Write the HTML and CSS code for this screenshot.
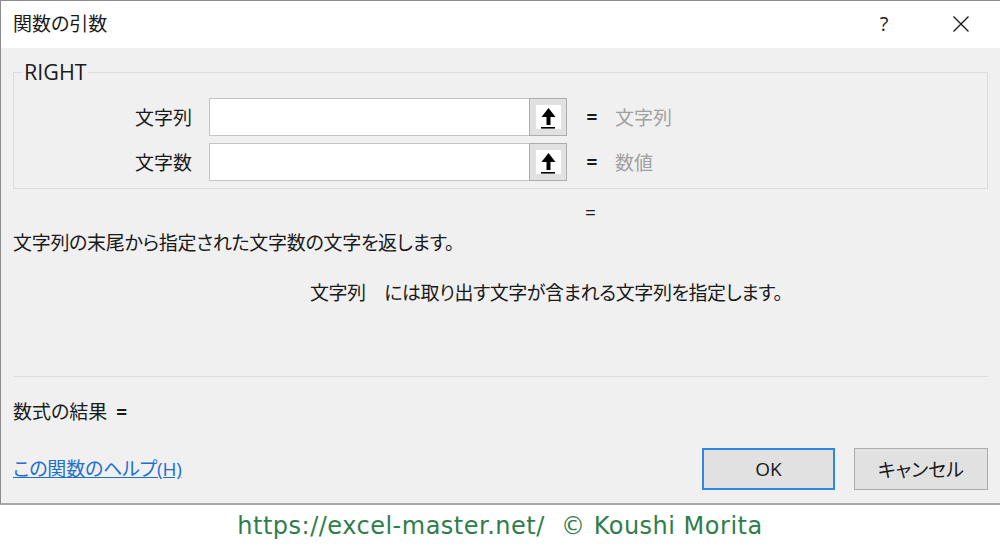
FILE: index.html
```html
<!DOCTYPE html>
<html lang="ja">
<head>
<meta charset="utf-8">
<link rel="stylesheet" href="styles.css">
</head>
<body>
<div class="dialog">
  <div class="titlebar">
    <div class="title">関数の引数</div>
    <div class="help">?</div>
    <div class="close">
      <svg width="18" height="18" viewBox="0 0 18 18"><path d="M1.5 1.5 L16.5 16.5 M16.5 1.5 L1.5 16.5" stroke="#1a1a1a" stroke-width="1.4" fill="none"/></svg>
    </div>
  </div>
  <div class="content">
    <fieldset class="group">
      <legend>RIGHT</legend>
      <div class="arg-row">
        <div class="arg-label">文字列</div>
        <div class="arg-input"></div>
        <div class="ref-btn"><span class="ref-icon"><svg width="25" height="24" viewBox="0 0 25 24"><path d="M12.5 3 L19.5 12 L14.5 12 L14.5 20 L10.5 20 L10.5 12 L5.5 12 Z" fill="#000"/><rect x="5" y="22" width="14" height="1.6" fill="#000"/></svg></span></div>
        <div class="arg-eq">=</div>
        <div class="arg-value">文字列</div>
      </div>
      <div class="arg-row">
        <div class="arg-label">文字数</div>
        <div class="arg-input"></div>
        <div class="ref-btn"><span class="ref-icon"><svg width="25" height="24" viewBox="0 0 25 24"><path d="M12.5 3 L19.5 12 L14.5 12 L14.5 20 L10.5 20 L10.5 12 L5.5 12 Z" fill="#000"/><rect x="5" y="22" width="14" height="1.6" fill="#000"/></svg></span></div>
        <div class="arg-eq">=</div>
        <div class="arg-value">数値</div>
      </div>
    </fieldset>
    <div class="result-eq">=</div>
    <div class="desc">文字列の末尾から指定された文字数の文字を返します。</div>
    <div class="arg-help">文字列　には取り出す文字が含まれる文字列を指定します。</div>
    <div class="separator"></div>
    <div class="formula">数式の結果 <span class="eq">=</span></div>
    <div class="bottom-row">
      <a class="help-link" href="#">この関数のヘルプ(H)</a>
      <div class="buttons">
        <div class="btn btn-ok">OK</div>
        <div class="btn">キャンセル</div>
      </div>
    </div>
  </div>
</div>
<div class="footer">https://excel-master.net/&nbsp; © Koushi Morita</div>
</body>
</html>
```
FILE: styles.css
```css
html, body {
  margin: 0;
  padding: 0;
  background: #ffffff;
}
body {
  width: 1000px;
  height: 546px;
  overflow: hidden;
  font-family: "Open Sans", "Noto Sans CJK JP", sans-serif;
  font-size: 19px;
  color: #1a1a1a;
  font-feature-settings: "palt";
}
.dialog {
  border-top: 1px solid #8c8c8c;
  border-left: 1px solid #8c8c8c;
  border-bottom: 2px solid #a8a8a8;
  background: #f0f0f0;
}
.titlebar {
  height: 47px;
  background: #ffffff;
  display: flex;
  align-items: center;
  padding-left: 12px;
}
.title {
  flex: 1;
  line-height: 24px;
  margin-top: -2px;
}
.help {
  width: 30px;
  text-align: center;
  font-size: 20px;
  margin-right: 53px;
  margin-top: -2px;
}
.close {
  width: 18px;
  height: 18px;
  margin-right: 30px;
  margin-top: -2px;
}
.close svg { display: block; }
.content {
  padding: 12px 12px 13px 12px;
}
.group {
  margin: 0;
  border: 1px solid #dcdcdc;
  padding: 14px 0 7px 0;
  min-width: 0;
}
.group legend {
  padding: 0 1px;
  margin-left: 9px;
  line-height: 24px;
  font-size: 21.5px;
}
.arg-row {
  display: flex;
  align-items: center;
  height: 38px;
}
.arg-row + .arg-row {
  margin-top: 7px;
}
.arg-label {
  width: 178px;
  text-align: right;
  margin-right: 17px;
}
.arg-input {
  width: 319px;
  height: 36px;
  background: #ffffff;
  border: 1px solid #c4c4c4;
}
.ref-btn {
  width: 36px;
  height: 36px;
  background: #e1e1e1;
  border: 1px solid #adadad;
  margin-left: -1px;
  display: flex;
  align-items: center;
  justify-content: center;
}
.ref-icon {
  width: 25px;
  height: 24px;
  background: #ffffff;
  display: flex;
  align-items: center;
  justify-content: center;
}
.ref-icon svg { display: block; }
.arg-eq {
  margin-left: 18px;
  width: 14px;
  font-weight: bold;
  text-align: center;
}
.arg-value {
  margin-left: 16px;
  color: #a0a0a0;
}
.result-eq {
  margin-top: 11px;
  line-height: 24px;
  padding-left: 572px;
}
.desc {
  margin-top: 7px;
  line-height: 24px;
  letter-spacing: -0.3px;
}
.arg-help {
  margin-top: 26px;
  line-height: 24px;
  padding-left: 297px;
  letter-spacing: -0.45px;
}
.separator {
  margin-top: 71px;
  height: 1px;
  background: #dcdcdc;
}
.formula {
  margin-top: 23px;
  line-height: 24px;
}
.formula .eq {
  font-weight: bold;
  margin-left: 4px;
}
.bottom-row {
  margin-top: 24px;
  display: flex;
  align-items: center;
  justify-content: space-between;
}
.help-link {
  color: #1e6fce;
  text-decoration: underline;
  line-height: 24px;
  letter-spacing: -0.2px;
}
.buttons {
  display: flex;
  gap: 19px;
}
.btn {
  width: 132px;
  height: 40px;
  background: #e1e1e1;
  border: 1px solid #adadad;
  display: flex;
  align-items: center;
  justify-content: center;
}
.btn-ok {
  width: 129px;
  height: 38px;
  border: 2px solid #2e86e0;
}
.footer {
  height: 41px;
  display: flex;
  align-items: center;
  justify-content: center;
  color: #2f7d4a;
  font-family: "DejaVu Sans", "Noto Sans", sans-serif;
  font-size: 24px;
  letter-spacing: 0.5px;
  font-feature-settings: normal;
}
```
